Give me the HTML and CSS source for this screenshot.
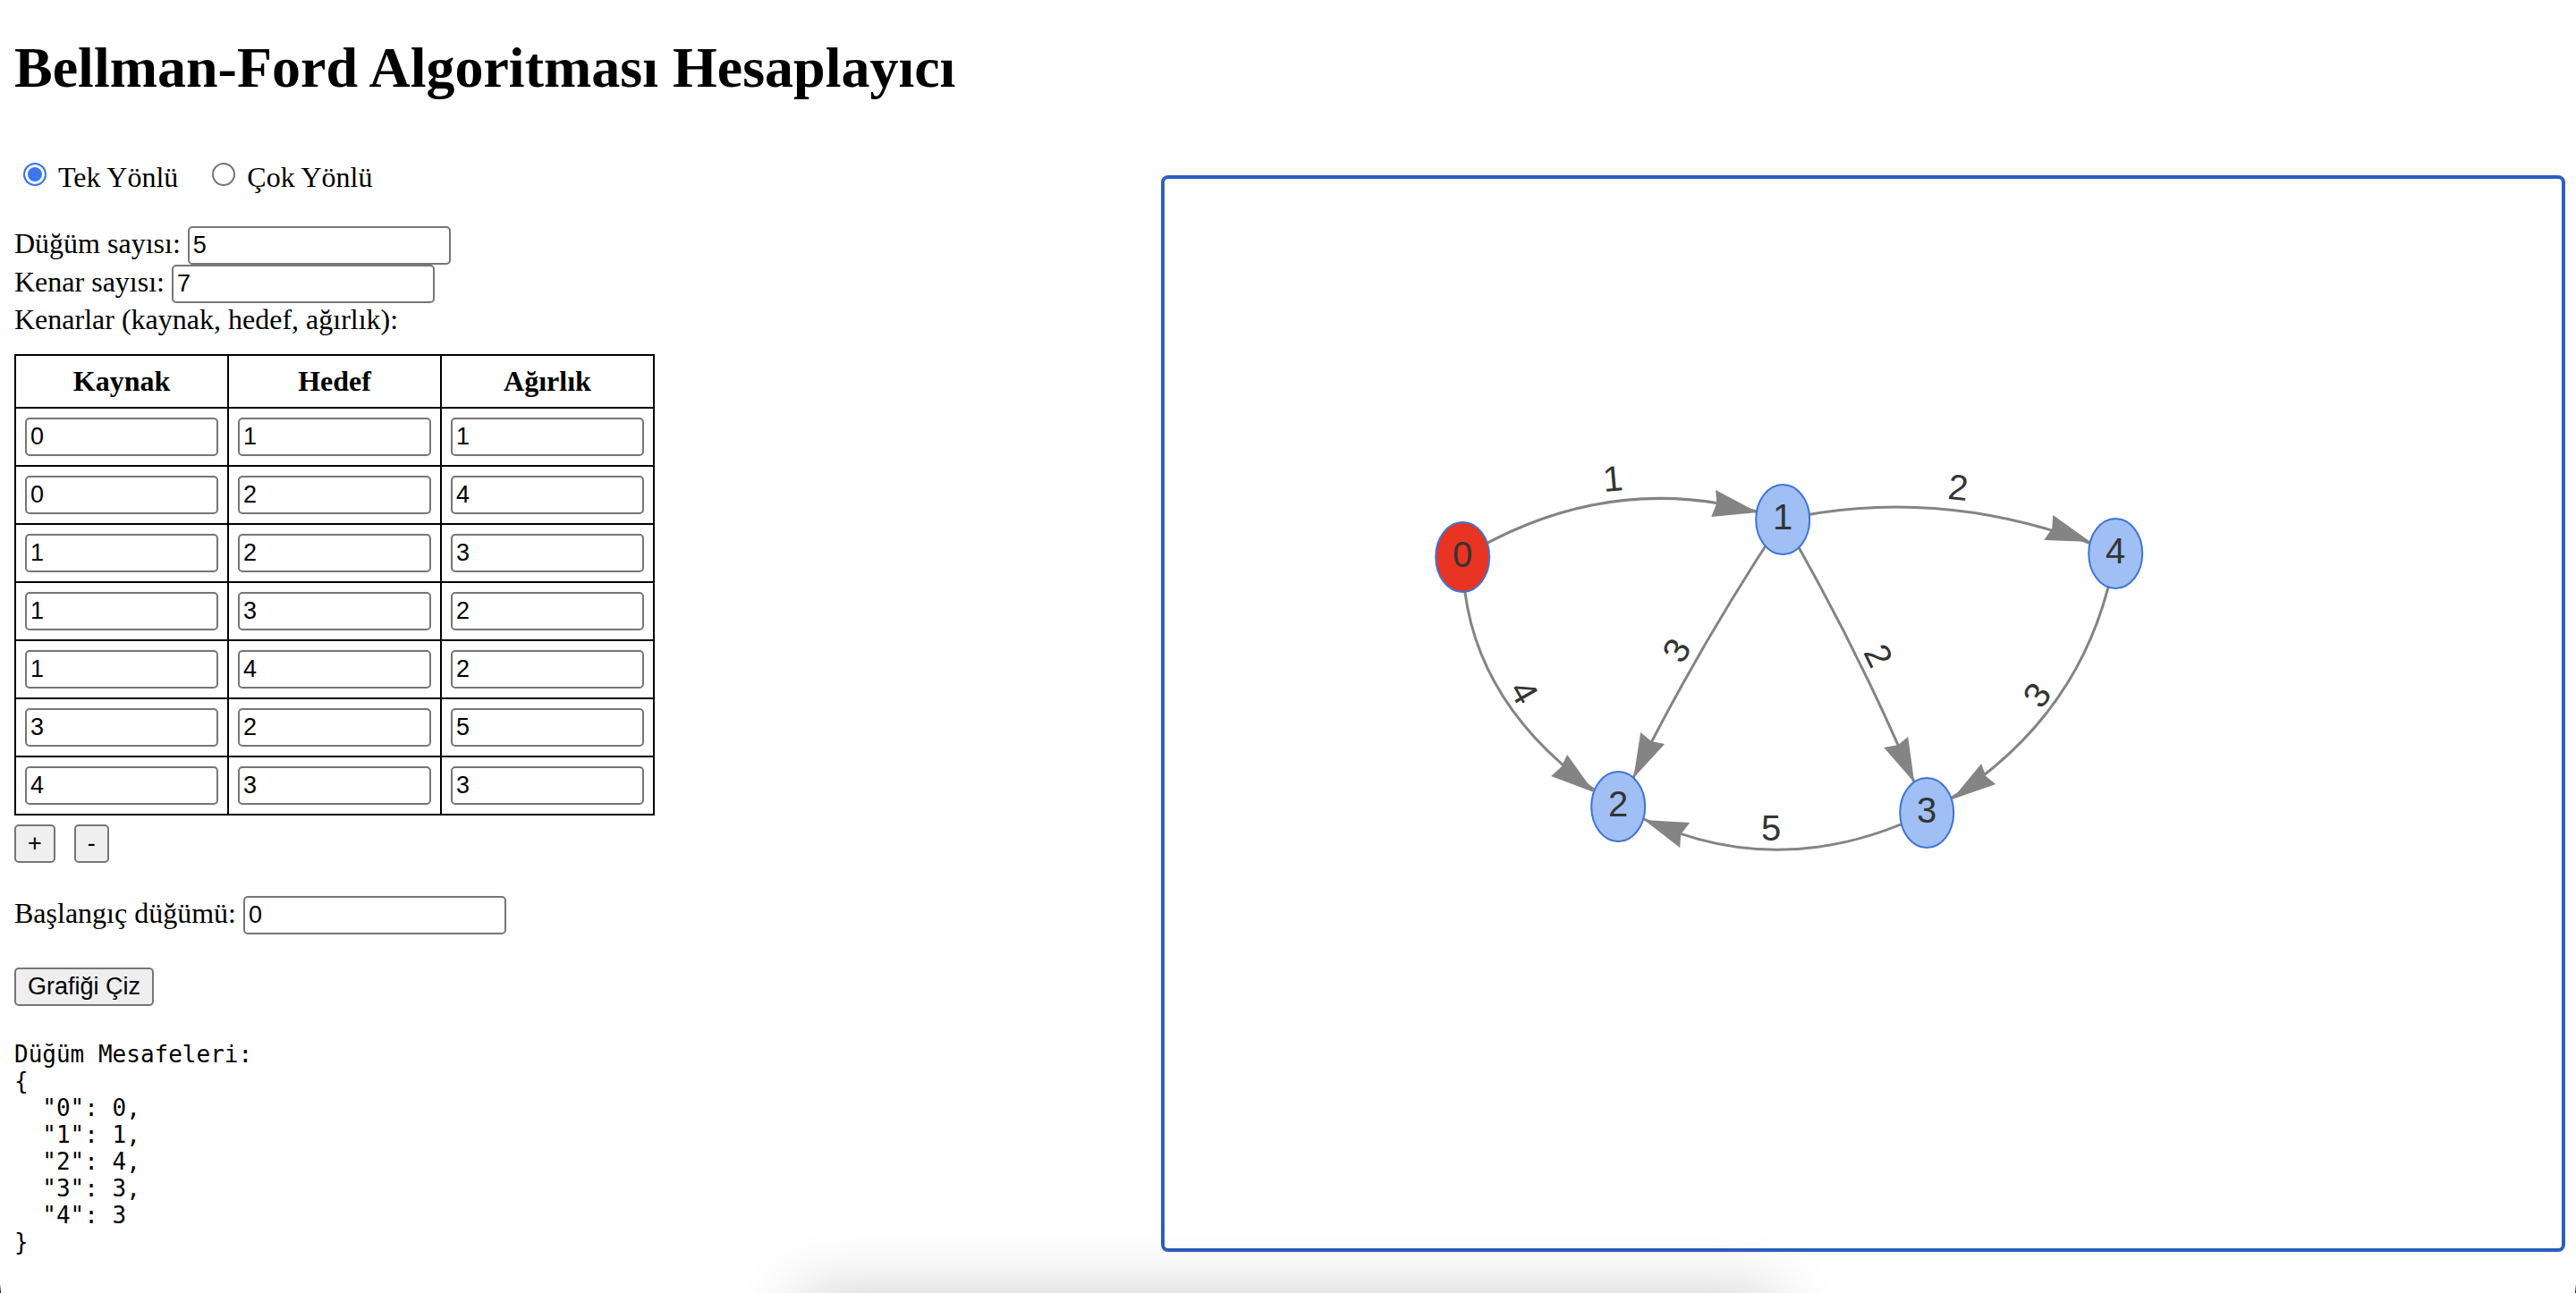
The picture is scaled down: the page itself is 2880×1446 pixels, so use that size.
FILE: index.html
```
<!DOCTYPE html>
<html lang="tr">
<head>
<meta charset="utf-8">
<meta name="viewport" content="width=device-width, initial-scale=1">
<title>Bellman-Ford Algoritması Hesaplayıcı</title>
<link rel="stylesheet" href="styles.css">
</head>
<body>
<h1>Bellman-Ford Algoritması Hesaplayıcı</h1>
<main class="layout">
  <form class="panel">
    <div class="directions">
      <label class="option"><input type="radio" name="direction" checked>Tek Yönlü</label>
      <label class="option"><input type="radio" name="direction">Çok Yönlü</label>
    </div>
    <div class="field"><label for="nodes">Düğüm sayısı:</label><input class="box" type="text" id="nodes" value="5"></div>
    <div class="field"><label for="edges">Kenar sayısı:</label><input class="box" type="text" id="edges" value="7"></div>
    <div id="edges-title">Kenarlar (kaynak, hedef, ağırlık):</div>
    <table class="edges" aria-labelledby="edges-title">
      <thead><tr><th>Kaynak</th><th>Hedef</th><th>Ağırlık</th></tr></thead>
      <tbody>
        <tr><td><input class="box" aria-label="Kaynak 1" value="0"></td><td><input class="box" aria-label="Hedef 1" value="1"></td><td><input class="box" aria-label="Ağırlık 1" value="1"></td></tr>
        <tr><td><input class="box" aria-label="Kaynak 2" value="0"></td><td><input class="box" aria-label="Hedef 2" value="2"></td><td><input class="box" aria-label="Ağırlık 2" value="4"></td></tr>
        <tr><td><input class="box" aria-label="Kaynak 3" value="1"></td><td><input class="box" aria-label="Hedef 3" value="2"></td><td><input class="box" aria-label="Ağırlık 3" value="3"></td></tr>
        <tr><td><input class="box" aria-label="Kaynak 4" value="1"></td><td><input class="box" aria-label="Hedef 4" value="3"></td><td><input class="box" aria-label="Ağırlık 4" value="2"></td></tr>
        <tr><td><input class="box" aria-label="Kaynak 5" value="1"></td><td><input class="box" aria-label="Hedef 5" value="4"></td><td><input class="box" aria-label="Ağırlık 5" value="2"></td></tr>
        <tr><td><input class="box" aria-label="Kaynak 6" value="3"></td><td><input class="box" aria-label="Hedef 6" value="2"></td><td><input class="box" aria-label="Ağırlık 6" value="5"></td></tr>
        <tr><td><input class="box" aria-label="Kaynak 7" value="4"></td><td><input class="box" aria-label="Hedef 7" value="3"></td><td><input class="box" aria-label="Ağırlık 7" value="3"></td></tr>
      </tbody>
    </table>
    <div class="row-buttons"><button type="button">+</button><button type="button">-</button></div>
    <div class="field start"><label for="start">Başlangıç düğümü:</label><input class="box" type="text" id="start" value="0"></div>
    <button type="button">Grafiği Çiz</button>
    <pre class="result">Düğüm Mesafeleri:
{
  "0": 0,
  "1": 1,
  "2": 4,
  "3": 3,
  "4": 3
}</pre>
  </form>
  <section class="network" aria-label="Graf">
    <svg viewBox="0 0 1562 1196">
      <g class="edge-lines">
        <path d="M333 423Q505 318 691 381"/>
        <path d="M333 423Q334 592 508 702"/>
        <path d="M691 381Q588 536 508 702"/>
        <path d="M691 381Q784 541 852 709"/>
        <path d="M691 381Q877 340 1063 419"/>
        <path d="M852 709Q676 795 508 702"/>
        <path d="M1063 419Q1030 610 852 709"/>
      </g>
      <g class="arrows">
        <path d="M663 373L616 348L617 363L611 378Z"/>
        <path d="M480 686L450 644L443 658L432 668Z"/>
        <path d="M524 670L532 619L544 629L559 632Z"/>
        <path d="M838 675L831 624L820 633L804 636Z"/>
        <path d="M1035 406L993 376L992 391L983 404Z"/>
        <path d="M536 717L587 720L577 733L576 748Z"/>
        <path d="M880 694L913 654L918 668L929 677Z"/>
      </g>
      <g class="nodes">
        <ellipse class="source" cx="333" cy="423" rx="30" ry="39"/>
        <ellipse cx="691" cy="381" rx="30" ry="39"/>
        <ellipse cx="507" cy="702" rx="30" ry="39"/>
        <ellipse cx="852" cy="709" rx="30" ry="39"/>
        <ellipse cx="1063" cy="419" rx="30" ry="39"/>
      </g>
      <g class="labels">
        <text x="333" y="434">0</text>
        <text x="691" y="392">1</text>
        <text x="507" y="713">2</text>
        <text x="852" y="720">3</text>
        <text x="1063" y="430">4</text>
        <text transform="translate(501 335) rotate(-5)" y="14">1</text>
        <text transform="translate(402 574) rotate(60)" y="14">4</text>
        <text transform="translate(572 527) rotate(-60)" y="14">3</text>
        <text transform="translate(798 533) rotate(64)" y="14">2</text>
        <text transform="translate(887 345) rotate(6)" y="14">2</text>
        <text x="678" y="740">5</text>
        <text transform="translate(975 577) rotate(-55)" y="14">3</text>
      </g>
    </svg>
  </section>
</main>
<div class="dock-shadow"></div>
</body>
</html>
```
FILE: styles.css
```
* { box-sizing: border-box; }

body {
  display: flex;
  flex-direction: column;
  min-height: 100vh;
  margin: 0;
  padding: 40px 16px;
  background: #fff;
  color: #000;
  font: 32px/37px "Liberation Serif", "Times New Roman", serif;
}

/* Dark rounded window corners peeking in at the bottom edge */
body::before,
body::after {
  content: "";
  position: fixed;
  bottom: 0;
  left: 0;
  width: 1px;
  height: 10px;
  background: linear-gradient(transparent, #000);
}

body::after {
  left: auto;
  right: 0;
}

h1 {
  margin: 0 0 68px;
  font-size: 64px;
  line-height: 72px;
}

.layout {
  display: flex;
  flex: 1;
}

.panel { flex: 0 0 45%; }

.directions {
  display: flex;
  gap: 28px;
  margin-bottom: 36px;
}

.option {
  display: flex;
  align-items: center;
  gap: 13px;
  padding-left: 10px;
}

input[type="radio"] {
  appearance: none;
  width: 26px;
  height: 26px;
  margin: 0 0 7px;
  border: 2px solid #767676;
  border-radius: 50%;
}

input[type="radio"]:checked {
  border-color: #3b77ee;
  background: #3b77ee;
  box-shadow: inset 0 0 0 3px #fff;
}

.field {
  display: flex;
  align-items: baseline;
  gap: 8px;
  height: 43px;
}

.box {
  width: 294px;
  height: 43px;
  margin: 0;
  padding: 2px 4px;
  border: 2px solid #767676;
  border-radius: 5px;
  background: #fff;
  color: #000;
  font: 27px "Liberation Sans", Arial, sans-serif;
}

.edges {
  margin-top: 20px;
  border-collapse: collapse;
}

.edges th,
.edges td {
  padding: 10px;
  border: 2px solid #000;
}

.edges .box {
  display: block;
  width: 216px;
}

button {
  height: 43px;
  padding: 0 13px;
  border: 2px solid #767676;
  border-radius: 5px;
  background: #efefef;
  color: #000;
  font: 27px "Liberation Sans", Arial, sans-serif;
}

.row-buttons {
  display: flex;
  gap: 21px;
  margin-top: 10px;
}

.start { margin: 37px 0; }

.panel > button { display: block; }

.result {
  margin: 39px 0 0;
  font: 26px/30px "DejaVu Sans Mono", Menlo, monospace;
}

.network {
  position: relative;
  flex: 1;
  min-height: 600px;
  margin: 16px -4px 6px 0;
  border: 4px solid #2b5fc0;
  border-radius: 8px;
}

.network svg {
  position: absolute;
  inset: 0;
  width: 100%;
  height: 100%;
}

.edge-lines path {
  fill: none;
  stroke: #848484;
  stroke-width: 3px;
}

.arrows path { fill: #848484; }

.nodes ellipse {
  fill: #9fbff5;
  stroke: #3f74d6;
  stroke-width: 2px;
}

.nodes .source { fill: #e93323; }

.labels text {
  fill: #343434;
  font: 40px "Liberation Sans", Arial, sans-serif;
  text-anchor: middle;
}

/* Soft shadow rising from below the window */
.dock-shadow {
  position: fixed;
  top: 100%;
  left: 31%;
  right: 31%;
  height: 100px;
  box-shadow: 0 0 72px rgba(0, 0, 0, .2);
  pointer-events: none;
}
```
